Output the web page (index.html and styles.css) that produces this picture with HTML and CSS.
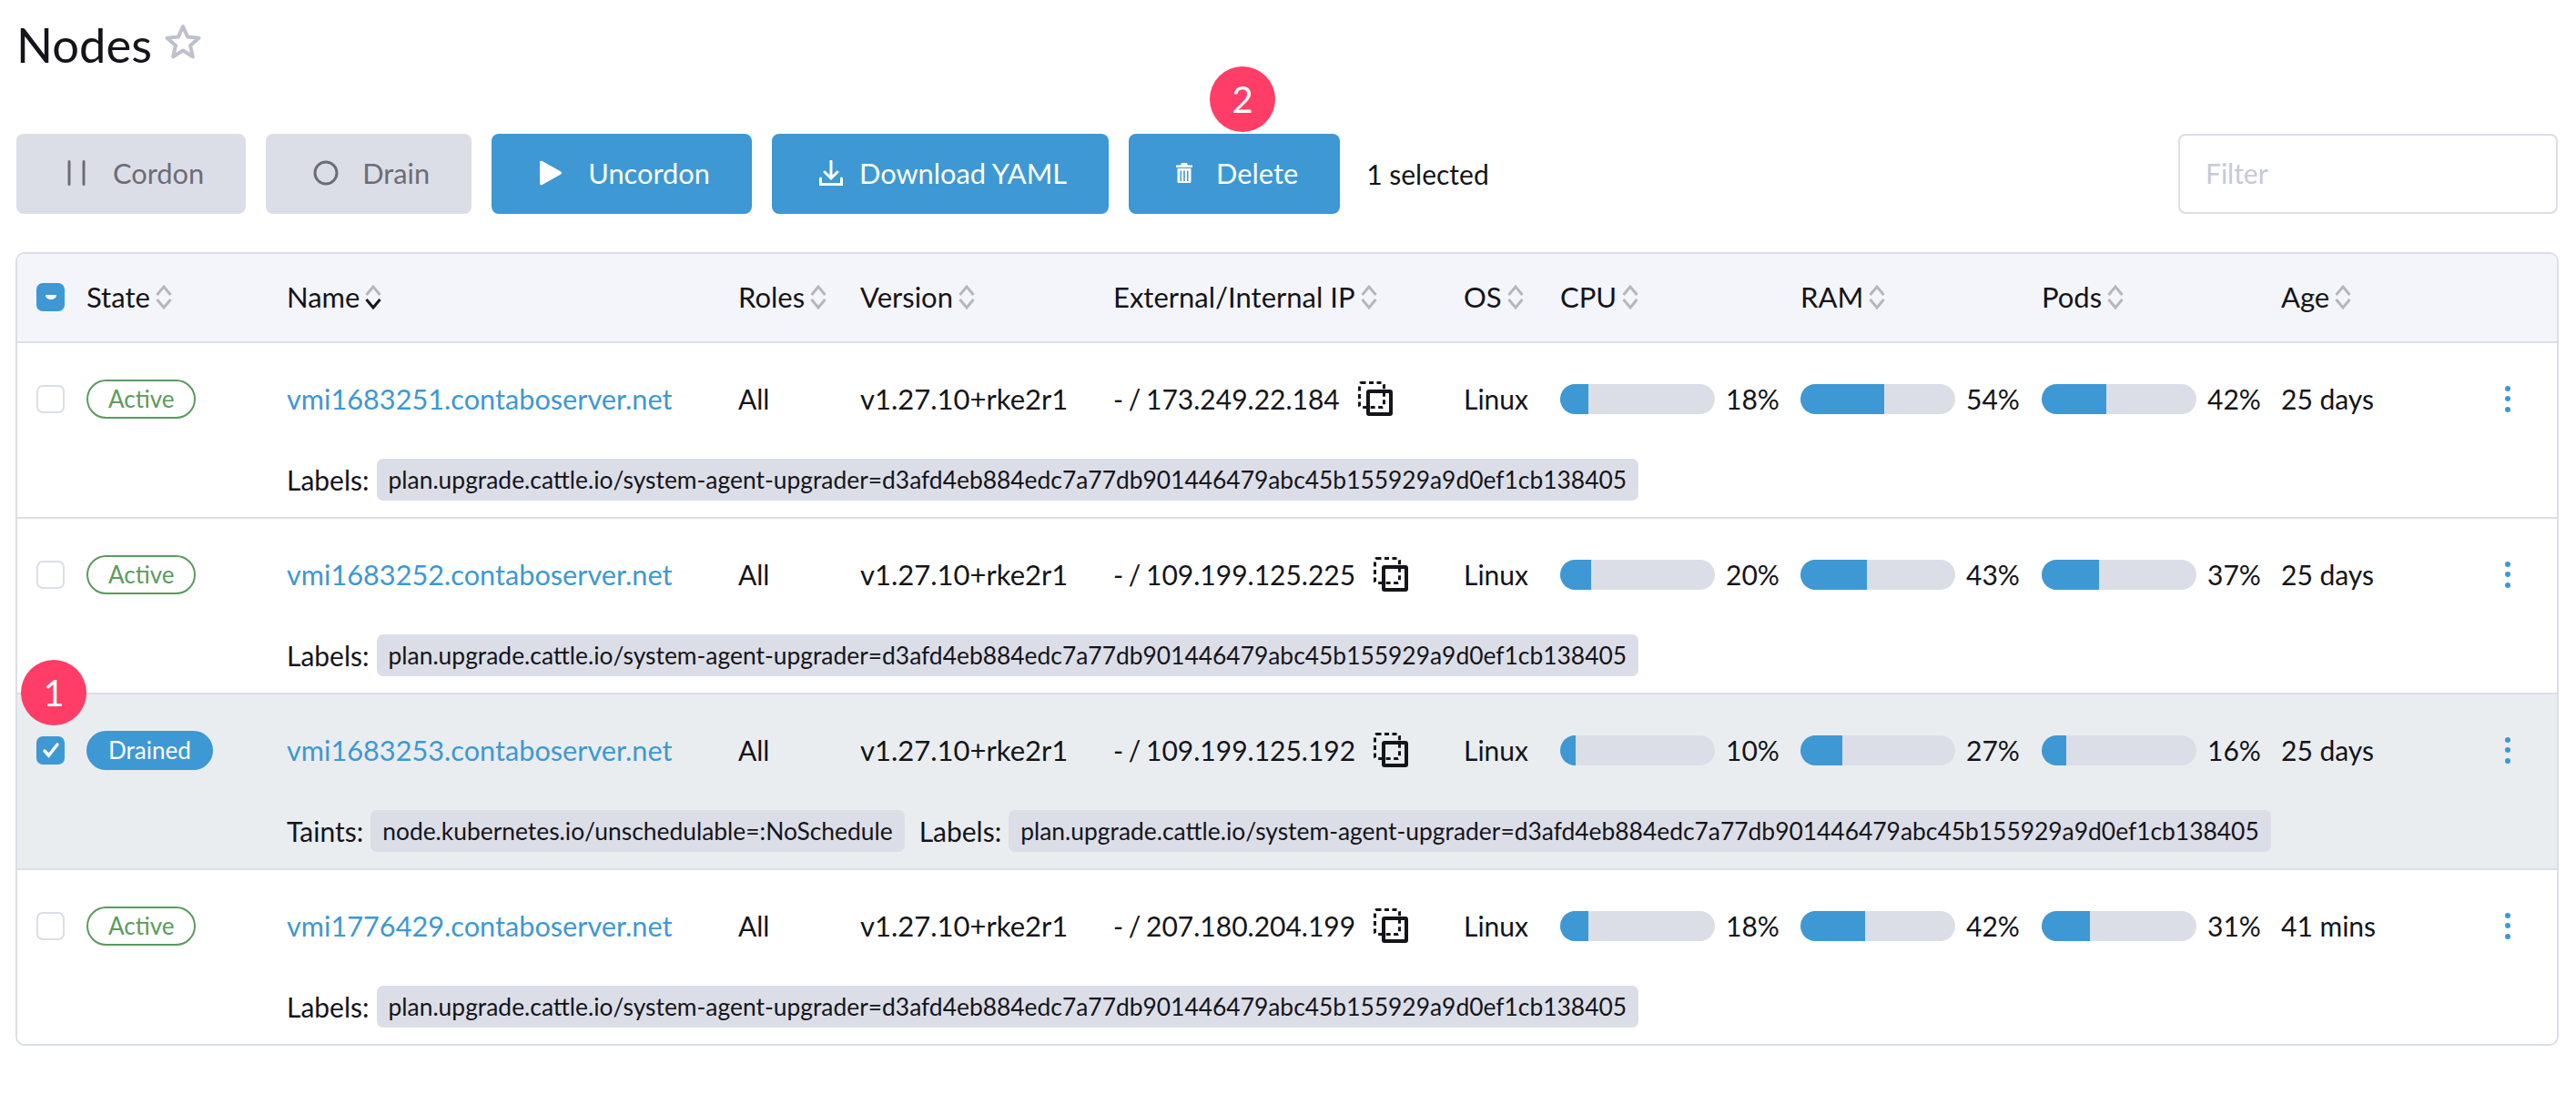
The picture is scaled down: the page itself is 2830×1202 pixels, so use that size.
FILE: index.html
```html
<!DOCTYPE html>
<html>
<head>
    <meta charset="utf-8">
    <title>Nodes</title>
    <link rel="stylesheet" href="styles.css">
</head>
<body>

<div class="page">
    <h1 class="title">Nodes
        <svg class="star" viewBox="0 0 40 40"><path d="M20 3l5 11.500 12.500 1.200-9.500 8.300 2.800 12.300L20 29.500 9.200 36.300 12 24 2.500 15.700 15 14.500z"/></svg>
    </h1>

    <div class="toolbar">
        <div class="btn btn-off"><span class="btn-icon"><svg width="32" height="28" viewBox="0 0 32 28"><path class="stroke" d="M6 1.500v25M22 1.500v25"/></svg></span>Cordon</div>
        <div class="btn btn-off"><span class="btn-icon"><svg width="28" height="28" viewBox="0 0 28 28"><circle class="stroke" cx="14" cy="14" r="12"/></svg></span>Drain</div>
        <div class="btn"><span class="btn-icon"><svg width="26" height="28" viewBox="0 0 26 28"><path class="fill" d="M1 2.500C1 1 2.500.3 3.700 1l20.500 11.500c1.200.7 1.200 2.300 0 3L3.700 27C2.500 27.700 1 27 1 25.500z"/></svg></span>Uncordon</div>
        <div class="btn"><span class="btn-icon btn-icon-sm"><svg width="26" height="28" viewBox="0 0 26 28"><path class="stroke" d="M13 1v19M6 13l7 7 7-7M1.500 20v6.500h23V20"/></svg></span>Download YAML</div>
        <div class="btn btn-del"><span class="btn-icon btn-icon-sm"><svg width="18" height="22" viewBox="0 0 18 22"><path class="fill" d="M6 0h6l1 2.500h5V5H0V2.500h5zM1.500 6h15v14.500c0 .8-.7 1.500-1.500 1.500H3c-.8 0-1.500-.7-1.500-1.500zM4.500 8.500V20h1.500V8.500zM8.200 8.500V20h1.600V8.500zM12 8.500V20h1.500V8.500z" fill-rule="evenodd"/></svg></span>Delete</div>
        <span class="selected">1 selected</span>
        <div class="filter">Filter</div>
    </div>

    <div class="table">
        <div class="row head">
            <span class="check check-part"><i></i></span>
            <span class="th">State<svg class="sort" viewBox="0 0 18 28"><path d="M1.500 12L9 3l7.500 9M1.500 17L9 26l7.500-9"/></svg></span>
            <span class="th">Name<svg class="sort" viewBox="0 0 18 28"><path d="M1.500 12L9 3l7.500 9"/><path class="on" d="M1.500 17L9 26l7.500-9"/></svg></span>
            <span class="th">Roles<svg class="sort" viewBox="0 0 18 28"><path d="M1.500 12L9 3l7.500 9M1.500 17L9 26l7.500-9"/></svg></span>
            <span class="th">Version<svg class="sort" viewBox="0 0 18 28"><path d="M1.500 12L9 3l7.500 9M1.500 17L9 26l7.500-9"/></svg></span>
            <span class="th">External/Internal IP<svg class="sort" viewBox="0 0 18 28"><path d="M1.500 12L9 3l7.500 9M1.500 17L9 26l7.500-9"/></svg></span>
            <span class="th">OS<svg class="sort" viewBox="0 0 18 28"><path d="M1.500 12L9 3l7.500 9M1.500 17L9 26l7.500-9"/></svg></span>
            <span class="th">CPU<svg class="sort" viewBox="0 0 18 28"><path d="M1.500 12L9 3l7.500 9M1.500 17L9 26l7.500-9"/></svg></span>
            <span class="th">RAM<svg class="sort" viewBox="0 0 18 28"><path d="M1.500 12L9 3l7.500 9M1.500 17L9 26l7.500-9"/></svg></span>
            <span class="th">Pods<svg class="sort" viewBox="0 0 18 28"><path d="M1.500 12L9 3l7.500 9M1.500 17L9 26l7.500-9"/></svg></span>
            <span class="th">Age<svg class="sort" viewBox="0 0 18 28"><path d="M1.500 12L9 3l7.500 9M1.500 17L9 26l7.500-9"/></svg></span>
        </div>

        <div class="node">
            <div class="row">
                <span class="check"></span>
                <span><span class="badge">Active</span></span>
                <a class="link">vmi1683251.contaboserver.net</a>
                <span>All</span>
                <span class="version">v1.27.10+rke2r1</span>
                <span class="ip">- / 173.249.22.184<svg class="copy" viewBox="0 0 38 38"><rect class="dash" x="1.500" y="1.500" width="27" height="27" rx="2"/><rect class="solid" x="11" y="11" width="25" height="25" rx="1"/></svg></span>
                <span>Linux</span>
                <span class="meter"><span class="bar"><span class="bar-fill" style="width:18%"></span></span>18%</span>
                <span class="meter"><span class="bar"><span class="bar-fill" style="width:54%"></span></span>54%</span>
                <span class="meter"><span class="bar"><span class="bar-fill" style="width:42%"></span></span>42%</span>
                <span>25 days</span>
                <span class="dots"><i></i><i></i><i></i></span>
            </div>
            <div class="extra"><span>Labels:</span><span class="chip">plan.upgrade.cattle.io/system-agent-upgrader=d3afd4eb884edc7a77db901446479abc45b155929a9d0ef1cb138405</span></div>
        </div>

        <div class="node">
            <div class="row">
                <span class="check"></span>
                <span><span class="badge">Active</span></span>
                <a class="link">vmi1683252.contaboserver.net</a>
                <span>All</span>
                <span class="version">v1.27.10+rke2r1</span>
                <span class="ip">- / 109.199.125.225<svg class="copy" viewBox="0 0 38 38"><rect class="dash" x="1.500" y="1.500" width="27" height="27" rx="2"/><rect class="solid" x="11" y="11" width="25" height="25" rx="1"/></svg></span>
                <span>Linux</span>
                <span class="meter"><span class="bar"><span class="bar-fill" style="width:20%"></span></span>20%</span>
                <span class="meter"><span class="bar"><span class="bar-fill" style="width:43%"></span></span>43%</span>
                <span class="meter"><span class="bar"><span class="bar-fill" style="width:37%"></span></span>37%</span>
                <span>25 days</span>
                <span class="dots"><i></i><i></i><i></i></span>
            </div>
            <div class="extra"><span>Labels:</span><span class="chip">plan.upgrade.cattle.io/system-agent-upgrader=d3afd4eb884edc7a77db901446479abc45b155929a9d0ef1cb138405</span></div>
        </div>

        <div class="node node-selected">
            <div class="row">
                <span class="check check-on"><svg width="20" height="20" viewBox="0 0 20 20"><path d="M3 11l4.500 5L17 4"/></svg></span>
                <span><span class="badge badge-drained">Drained</span></span>
                <a class="link">vmi1683253.contaboserver.net</a>
                <span>All</span>
                <span class="version">v1.27.10+rke2r1</span>
                <span class="ip">- / 109.199.125.192<svg class="copy" viewBox="0 0 38 38"><rect class="dash" x="1.500" y="1.500" width="27" height="27" rx="2"/><rect class="solid" x="11" y="11" width="25" height="25" rx="1"/></svg></span>
                <span>Linux</span>
                <span class="meter"><span class="bar"><span class="bar-fill" style="width:10%"></span></span>10%</span>
                <span class="meter"><span class="bar"><span class="bar-fill" style="width:27%"></span></span>27%</span>
                <span class="meter"><span class="bar"><span class="bar-fill" style="width:16%"></span></span>16%</span>
                <span>25 days</span>
                <span class="dots"><i></i><i></i><i></i></span>
            </div>
            <div class="extra"><span>Taints:</span><span class="chip">node.kubernetes.io/unschedulable=:NoSchedule</span><span class="extra-next">Labels:</span><span class="chip">plan.upgrade.cattle.io/system-agent-upgrader=d3afd4eb884edc7a77db901446479abc45b155929a9d0ef1cb138405</span></div>
        </div>

        <div class="node">
            <div class="row">
                <span class="check"></span>
                <span><span class="badge">Active</span></span>
                <a class="link">vmi1776429.contaboserver.net</a>
                <span>All</span>
                <span class="version">v1.27.10+rke2r1</span>
                <span class="ip">- / 207.180.204.199<svg class="copy" viewBox="0 0 38 38"><rect class="dash" x="1.500" y="1.500" width="27" height="27" rx="2"/><rect class="solid" x="11" y="11" width="25" height="25" rx="1"/></svg></span>
                <span>Linux</span>
                <span class="meter"><span class="bar"><span class="bar-fill" style="width:18%"></span></span>18%</span>
                <span class="meter"><span class="bar"><span class="bar-fill" style="width:42%"></span></span>42%</span>
                <span class="meter"><span class="bar"><span class="bar-fill" style="width:31%"></span></span>31%</span>
                <span>41 mins</span>
                <span class="dots"><i></i><i></i><i></i></span>
            </div>
            <div class="extra"><span>Labels:</span><span class="chip">plan.upgrade.cattle.io/system-agent-upgrader=d3afd4eb884edc7a77db901446479abc45b155929a9d0ef1cb138405</span></div>
        </div>
    </div>

    <div class="marker marker-one">1</div>
    <div class="marker marker-two">2</div>
</div>

</body>
</html>
```

FILE: styles.css
```css
body {
    font-family: Lato, "Open Sans", sans-serif;
    margin: 0;
    padding: 0;
    background-color: #fff;
    color: #141419;
    font-size: 30px;
}
.page {
    position: relative;
    padding: 18px 20px 0 18px;
}
.title {
    display: flex;
    align-items: center;
    gap: 14px;
    height: 60px;
    margin: 0 0 69px 0;
    font-size: 52.500px;
    font-weight: 400;
}
.star {
    width: 40px;
    height: 40px;
    margin-top: -4px;
}
.star path {
    fill: none;
    stroke: #bfc0ce;
    stroke-width: 4;
    stroke-linejoin: round;
}

.toolbar {
    display: flex;
    align-items: center;
    gap: 22px;
    height: 88px;
    margin-bottom: 42px;
}
.btn {
    display: flex;
    align-items: center;
    height: 88px;
    padding: 0 46px 2px 52px;
    border-radius: 8px;
    background-color: #3d98d3;
    color: #fff;
    font-size: 30.800px;
    box-sizing: border-box;
}
.btn-off {
    background-color: #dcdee7;
    color: #6c6c76;
}
.btn-icon {
    display: flex;
    align-items: center;
    width: 54px;
    flex: none;
}
.btn-icon-sm {
    width: 44px;
}
.stroke {
    fill: none;
    stroke: currentColor;
    stroke-width: 3;
    stroke-linecap: round;
}
.fill {
    fill: currentColor;
}
.selected {
    margin-left: 7px;
}
.filter {
    width: 417px;
    height: 88px;
    margin-left: auto;
    padding-left: 28px;
    line-height: 82px;
    border: 2px solid #dcdee7;
    border-radius: 8px;
    color: #c7c9d6;
    box-sizing: border-box;
}

.table {
    margin-left: -1px;
    margin-right: -1px;
    border: 2px solid #dcdee7;
    border-radius: 10px;
    overflow: hidden;
}
.row {
    display: grid;
    grid-template-columns: 55px 220px 496px 134px 278px 385px 106px 264px 265px 263px 228px 1fr;
    align-items: center;
    height: 122px;
    padding-left: 21px;
}
.head {
    background-color: #f4f5fa;
    border-bottom: 2px solid #dcdee7;
    box-sizing: border-box;
    height: 98px;
    padding-bottom: 2px;
}
.th {
    display: flex;
    align-items: center;
    gap: 6px;
    font-size: 31px;
}
.sort {
    width: 18px;
    height: 28px;
    flex: none;
}
.sort path {
    fill: none;
    stroke: #b6b6bb;
    stroke-width: 3;
}
.sort .on {
    stroke: #141419;
}

.node {
    height: 193px;
    border-bottom: 2px solid #dcdee7;
    box-sizing: border-box;
}
.node:last-child {
    height: 191px;
    border-bottom: none;
}
.node-selected {
    background-color: #e9edf0;
}
.check {
    display: flex;
    align-items: center;
    justify-content: center;
    width: 31px;
    height: 31px;
    border: 2px solid #dcdee7;
    border-radius: 7px;
    background-color: #fff;
    box-sizing: border-box;
}
.check-part, .check-on {
    border-color: #3d98d3;
    background-color: #3d98d3;
}
.check-part i {
    display: block;
    width: 12px;
    height: 5px;
    background-color: #fff;
    border-radius: 0 0 6px 6px;
}
.check-on path {
    fill: none;
    stroke: #fff;
    stroke-width: 3.500;
    stroke-linecap: round;
}
.badge {
    display: inline-block;
    height: 43px;
    padding: 0 22px;
    border: 2px solid #5b9b5e;
    border-radius: 22px;
    color: #5b9b5e;
    font-size: 26px;
    line-height: 39px;
    box-sizing: border-box;
}
.badge-drained {
    border-color: #3d98d3;
    background-color: #3d98d3;
    color: #fff;
}
.link {
    color: #3d98d3;
    font-size: 30.700px;
}
.version {
    font-size: 31px;
}
.ip {
    display: flex;
    align-items: center;
    gap: 20px;
    word-spacing: -2px;
}
.copy {
    width: 38px;
    height: 38px;
    flex: none;
}
.copy rect {
    fill: none;
    stroke: #141419;
}
.copy .dash {
    stroke-width: 3;
    stroke-dasharray: 5 3.500;
}
.copy .solid {
    stroke-width: 4;
}
.meter {
    display: flex;
    align-items: center;
    gap: 12px;
}
.bar {
    display: block;
    width: 170px;
    height: 33px;
    border-radius: 17px;
    background-color: #dcdee7;
    overflow: hidden;
}
.bar-fill {
    display: block;
    height: 100%;
    background-color: #3d98d3;
}
.dots {
    display: flex;
    flex-direction: column;
    gap: 5.500px;
    margin-left: 18px;
}
.dots i {
    display: block;
    width: 6px;
    height: 6px;
    border-radius: 50%;
    background-color: #3d98d3;
}
.extra {
    display: flex;
    align-items: center;
    margin-top: 5px;
    padding-left: 296px;
    font-size: 30px;
}
.chip {
    margin-left: 8px;
    padding: 0 13px;
    height: 46px;
    line-height: 46px;
    border-radius: 7px;
    background-color: #dcdee7;
    font-size: 26.400px;
}
.extra-next {
    margin-left: 16px;
}

.marker {
    position: absolute;
    width: 72px;
    height: 72px;
    border-radius: 50%;
    background-color: #ff3d66;
    color: #fff;
    font-size: 40px;
    line-height: 72px;
    text-align: center;
}
.marker-one {
    left: 23px;
    top: 725px;
}
.marker-two {
    left: 1329px;
    top: 73px;
}
```
